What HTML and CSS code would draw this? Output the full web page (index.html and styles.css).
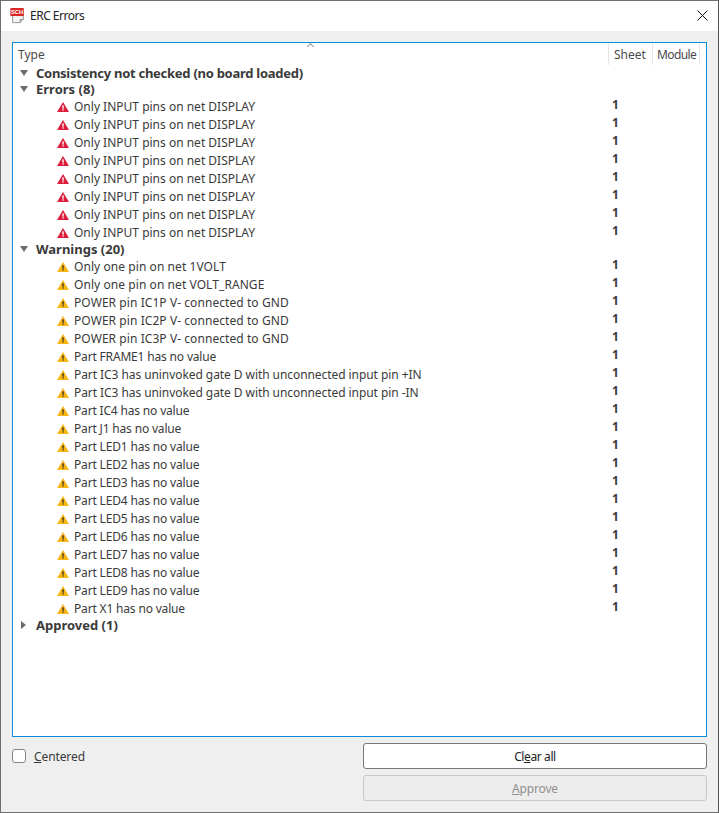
FILE: index.html
```html
<!DOCTYPE html>
<html lang="en">
<head>
  <meta charset="UTF-8">
  <title>ERC Errors</title>
  <link rel="stylesheet" href="styles.css">
</head>
<body>
  <svg class="defs" width="0" height="0">
    <symbol id="err" viewBox="0 0 13 12" preserveAspectRatio="none">
      <path d="M6.5 0 L13 12 H0 Z" fill="#dc1e3c"/>
      <rect x="5.8" y="4" width="1.5" height="4" fill="#fff"/>
      <rect x="5.8" y="8.8" width="1.5" height="1.5" fill="#fff"/>
    </symbol>
    <symbol id="warn" viewBox="0 0 13 12" preserveAspectRatio="none">
      <path d="M6.5 0 L13 12 H0 Z" fill="#f7b719"/>
      <rect x="5.8" y="4" width="1.5" height="4" fill="#3a3020"/>
      <rect x="5.8" y="8.8" width="1.5" height="1.5" fill="#3a3020"/>
    </symbol>
  </svg>
  <div class="window">
    <div class="titlebar">
      <svg class="app-icon" width="15" height="16" viewBox="0 0 16 18">
        <path d="M2.5 1.5 H14.5 V13 L11 16.5 H2.5 Z" fill="#f2f2f2" stroke="#8c8c8c"/>
        <path d="M11 16.5 V13 H14.5" fill="#d0d0d0" stroke="#8c8c8c"/>
        <rect x="0" y="0" width="15" height="9" fill="#d8282a"/>
        <text x="7.5" y="7" class="app-icon-text">SCH</text>
      </svg>
      <span class="title">ERC Errors</span>
      <svg class="close" width="11" height="11" viewBox="0 0 11 11">
        <path d="M.5 .5 L10.5 10.5 M10.5 .5 L.5 10.5" stroke="#111" stroke-width="1" fill="none"/>
      </svg>
    </div>
    <div class="content">
      <div class="tree">
        <div class="tree-head">
          <div class="col-type">Type<span class="sort"></span></div>
          <div class="col-sheet">Sheet</div>
          <div class="col-module">Module</div>
        </div>
        <div class="group g-first"><span class="tri open"></span>Consistency not checked (no board loaded)</div>
        <div class="group"><span class="tri open"></span>Errors (8)</div>
        <div class="row"><svg class="ico"><use href="#err"/></svg><span class="msg">Only INPUT pins on net DISPLAY</span><b>1</b></div>
        <div class="row"><svg class="ico"><use href="#err"/></svg><span class="msg">Only INPUT pins on net DISPLAY</span><b>1</b></div>
        <div class="row"><svg class="ico"><use href="#err"/></svg><span class="msg">Only INPUT pins on net DISPLAY</span><b>1</b></div>
        <div class="row"><svg class="ico"><use href="#err"/></svg><span class="msg">Only INPUT pins on net DISPLAY</span><b>1</b></div>
        <div class="row"><svg class="ico"><use href="#err"/></svg><span class="msg">Only INPUT pins on net DISPLAY</span><b>1</b></div>
        <div class="row"><svg class="ico"><use href="#err"/></svg><span class="msg">Only INPUT pins on net DISPLAY</span><b>1</b></div>
        <div class="row"><svg class="ico"><use href="#err"/></svg><span class="msg">Only INPUT pins on net DISPLAY</span><b>1</b></div>
        <div class="row"><svg class="ico"><use href="#err"/></svg><span class="msg">Only INPUT pins on net DISPLAY</span><b>1</b></div>
        <div class="group"><span class="tri open"></span>Warnings (20)</div>
        <div class="row"><svg class="ico"><use href="#warn"/></svg><span class="msg wide">Only one pin on net 1VOLT</span><b>1</b></div>
        <div class="row"><svg class="ico"><use href="#warn"/></svg><span class="msg wide">Only one pin on net VOLT_RANGE</span><b>1</b></div>
        <div class="row"><svg class="ico"><use href="#warn"/></svg><span class="msg wide">POWER pin IC1P V- connected to GND</span><b>1</b></div>
        <div class="row"><svg class="ico"><use href="#warn"/></svg><span class="msg wide">POWER pin IC2P V- connected to GND</span><b>1</b></div>
        <div class="row"><svg class="ico"><use href="#warn"/></svg><span class="msg wide">POWER pin IC3P V- connected to GND</span><b>1</b></div>
        <div class="row"><svg class="ico"><use href="#warn"/></svg><span class="msg part">Part FRAME1 has no value</span><b>1</b></div>
        <div class="row"><svg class="ico"><use href="#warn"/></svg><span class="msg long">Part IC3 has uninvoked gate D with unconnected input pin +IN</span><b>1</b></div>
        <div class="row"><svg class="ico"><use href="#warn"/></svg><span class="msg long">Part IC3 has uninvoked gate D with unconnected input pin -IN</span><b>1</b></div>
        <div class="row"><svg class="ico"><use href="#warn"/></svg><span class="msg part">Part IC4 has no value</span><b>1</b></div>
        <div class="row"><svg class="ico"><use href="#warn"/></svg><span class="msg part">Part J1 has no value</span><b>1</b></div>
        <div class="row"><svg class="ico"><use href="#warn"/></svg><span class="msg part">Part LED1 has no value</span><b>1</b></div>
        <div class="row"><svg class="ico"><use href="#warn"/></svg><span class="msg part">Part LED2 has no value</span><b>1</b></div>
        <div class="row"><svg class="ico"><use href="#warn"/></svg><span class="msg part">Part LED3 has no value</span><b>1</b></div>
        <div class="row"><svg class="ico"><use href="#warn"/></svg><span class="msg part">Part LED4 has no value</span><b>1</b></div>
        <div class="row"><svg class="ico"><use href="#warn"/></svg><span class="msg part">Part LED5 has no value</span><b>1</b></div>
        <div class="row"><svg class="ico"><use href="#warn"/></svg><span class="msg part">Part LED6 has no value</span><b>1</b></div>
        <div class="row"><svg class="ico"><use href="#warn"/></svg><span class="msg part">Part LED7 has no value</span><b>1</b></div>
        <div class="row"><svg class="ico"><use href="#warn"/></svg><span class="msg part">Part LED8 has no value</span><b>1</b></div>
        <div class="row"><svg class="ico"><use href="#warn"/></svg><span class="msg part">Part LED9 has no value</span><b>1</b></div>
        <div class="row"><svg class="ico"><use href="#warn"/></svg><span class="msg part">Part X1 has no value</span><b>1</b></div>
        <div class="group"><span class="tri closed"></span>Approved (1)</div>
      </div>
      <div class="footer">
        <label class="check"><span class="box"></span><span class="check-label"><u>C</u>entered</span></label>
        <div class="buttons">
          <button class="btn">Cl<u>e</u>ar all</button>
          <button class="btn" disabled><u>A</u>pprove</button>
        </div>
      </div>
    </div>
  </div>
</body>
</html>
```

FILE: styles.css
```css
html, body {
  margin: 0;
  padding: 0;
  height: 100%;
}
body {
  font-family: "Noto Sans", "Open Sans", sans-serif;
  font-size: 12px;
  color: #3a3a3a;
  background-color: #666;
}
.defs {
  position: absolute;
}
.window {
  box-sizing: border-box;
  height: 813px;
  border: 1px solid #6e6e6e;
  border-right-color: #555;
  display: flex;
  flex-direction: column;
  background-color: #efefef;
}
.titlebar {
  box-sizing: border-box;
  height: 30px;
  flex: none;
  display: flex;
  align-items: center;
  background-color: #fff;
  padding: 0 10px 1px 9px;
}
.app-icon {
  margin-top: 1px;
  margin-right: 5px;
}
.app-icon-text {
  font-family: "Liberation Sans", sans-serif;
  font-size: 6.5px;
  font-weight: bold;
  fill: #fff;
  text-anchor: middle;
}
.title {
  flex: 1;
  font-size: 12px;
  letter-spacing: -0.5px;
  color: #222;
}
.content {
  flex: 1;
  display: flex;
  flex-direction: column;
  padding: 11px 11px 0 11px;
}
.tree {
  box-sizing: border-box;
  height: 695px;
  border: 1px solid #0a8fd6;
  background-color: #fff;
}
.tree-head {
  display: flex;
  height: 23px;
  line-height: 23px;
  color: #4a4a4a;
}
.col-type {
  width: 595px;
  padding-left: 5px;
  box-sizing: border-box;
  position: relative;
}
.sort {
  position: absolute;
  left: 295px;
  top: 1px;
  width: 4px;
  height: 4px;
  border-left: 1px solid #999;
  border-top: 1px solid #999;
  transform: rotate(45deg);
}
.col-sheet {
  width: 44px;
  height: 22px;
  padding-left: 5px;
  box-sizing: border-box;
  border-left: 1px solid #e5e5e5;
}
.col-module {
  padding-left: 4px;
  width: 48px;
  height: 22px;
  letter-spacing: -0.6px;
  border-left: 1px solid #e5e5e5;
  border-right: 1px solid #e5e5e5;
  box-sizing: border-box;
}
.group {
  box-sizing: border-box;
  height: 16px;
  line-height: 14px;
  padding: 0 0 2px 23px;
  font-weight: bold;
  font-size: 13px;
  display: flex;
  align-items: center;
  position: relative;
}
.g-first {
  letter-spacing: -0.27px;
}
.tri {
  position: absolute;
  left: 7px;
  top: 4px;
  width: 0;
  height: 0;
}
.tri.open {
  border-left: 4px solid transparent;
  border-right: 4px solid transparent;
  border-top: 6px solid #6a6a6a;
}
.tri.closed {
  top: 3px;
  left: 8px;
  border-top: 4px solid transparent;
  border-bottom: 4px solid transparent;
  border-left: 5px solid #6a6a6a;
}
.row {
  height: 18px;
  line-height: 18px;
  display: flex;
  align-items: center;
  padding-left: 44px;
}
.ico {
  width: 12px;
  height: 10px;
  margin-right: 5px;
  flex: none;
}
.msg {
  width: 538px;
  flex: none;
}
.wide {
  letter-spacing: 0.07px;
}
.part {
  letter-spacing: -0.17px;
}
.long {
  letter-spacing: -0.07px;
}
.row b {
  font-weight: bold;
  position: relative;
  top: -2px;
}
.footer {
  display: flex;
  justify-content: space-between;
  padding-top: 6px;
}
.check {
  display: flex;
  align-items: center;
  height: 26px;
  gap: 8px;
}
.check-label {
  letter-spacing: -0.1px;
}
.box {
  box-sizing: border-box;
  width: 14px;
  height: 14px;
  border: 1px solid #848484;
  border-radius: 3px;
  background-color: #fff;
}
.buttons {
  display: flex;
  flex-direction: column;
  gap: 6px;
}
.btn {
  box-sizing: border-box;
  width: 344px;
  height: 26px;
  padding: 0;
  font-family: inherit;
  font-size: 12px;
  letter-spacing: -0.4px;
  color: #222;
  background-color: #fff;
  border: 1px solid #777;
  border-radius: 3px;
}
.btn:disabled {
  letter-spacing: -0.15px;
  color: #8f8f8f;
  background-color: #ececec;
  border-color: #c9c9c9;
}
```
